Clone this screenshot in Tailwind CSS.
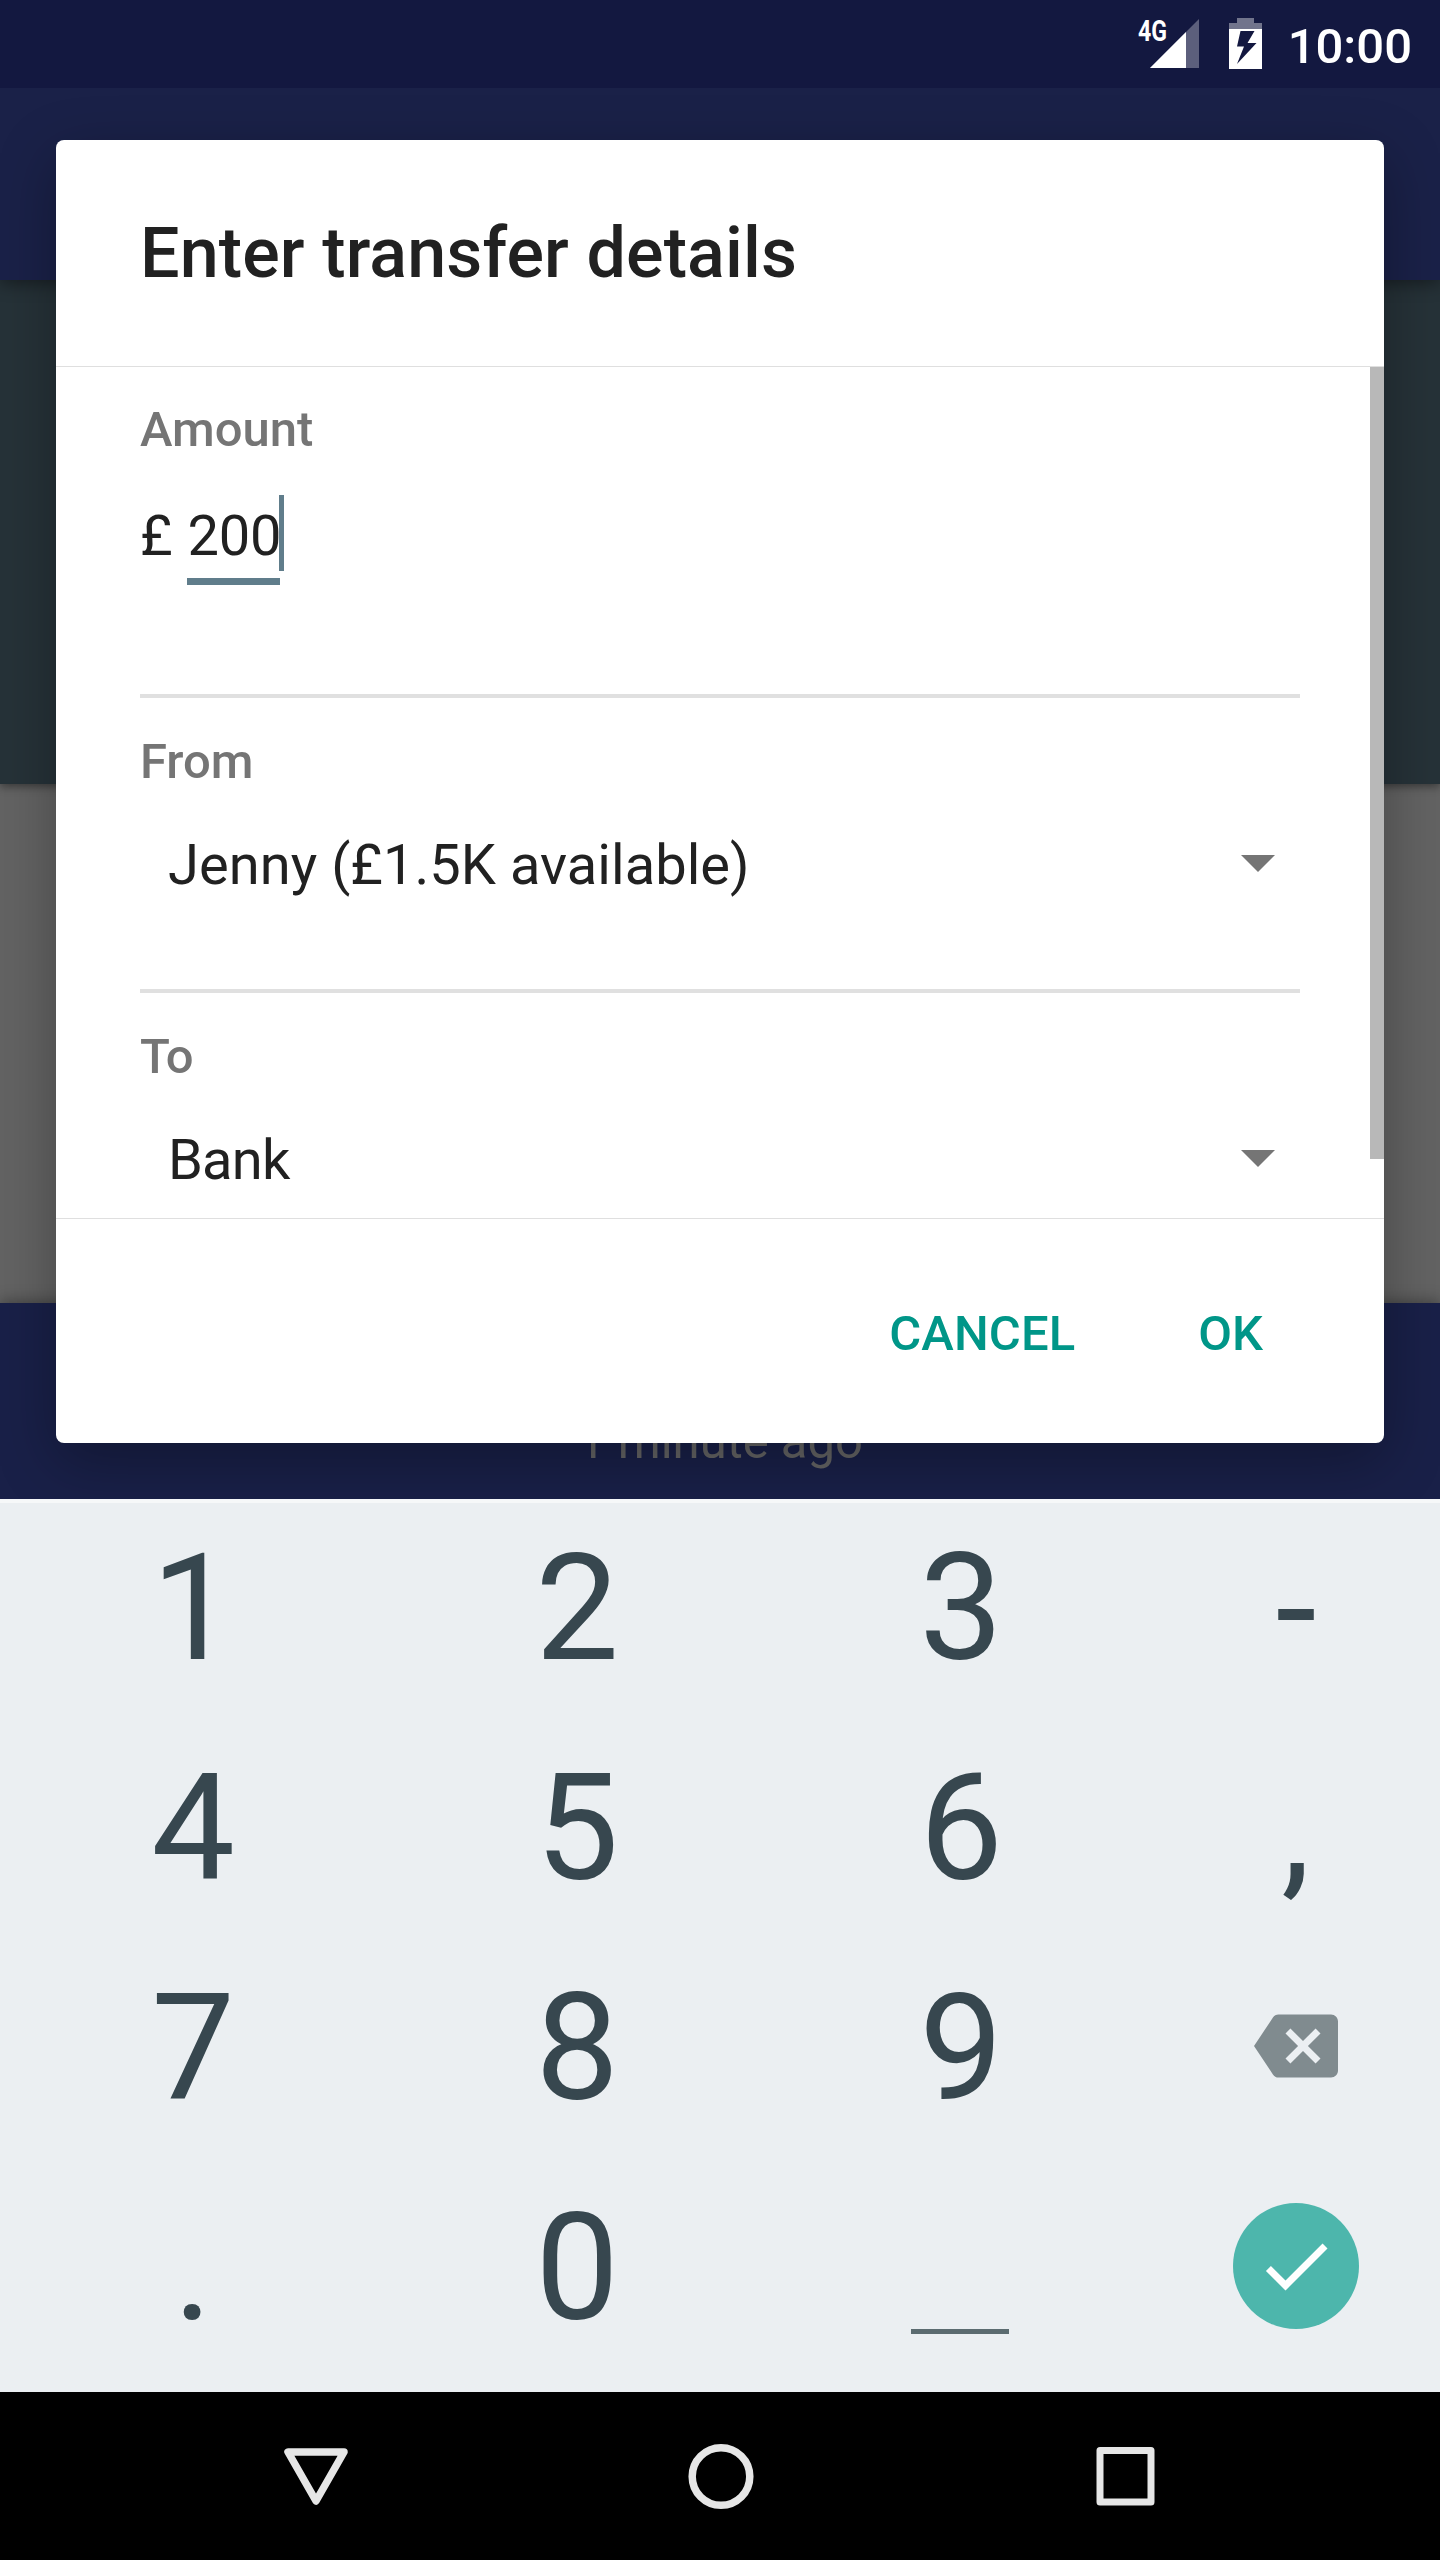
<!DOCTYPE html>
<html lang="en">
<head>
<meta charset="utf-8">
<title>Transfer</title>
<script src="https://cdn.jsdelivr.net/npm/@tailwindcss/browser@4"></script>
</head>
<body class="bg-black">
<div class="relative flex h-[2560px] w-[1440px] flex-col overflow-hidden font-['Roboto',sans-serif]">

  <!-- Status bar -->
  <header class="relative z-20 flex h-[88px] shrink-0 items-start justify-end bg-[#131840] pr-[28px] text-white">
    <div class="relative mt-[18px] h-[52px] w-[62px]">
      <span class="absolute -top-[5px] left-0 origin-left scale-x-[0.77] text-[30px] leading-[36px] font-bold">4G</span>
      <svg class="absolute top-0 left-[12px]" width="50" height="50" viewBox="0 0 50 50"><path d="M0 50L49 1V50Z" fill="#5c5f7c"/><path d="M0 50L36 14V50Z" fill="#fff"/></svg>
    </div>
    <svg class="mt-[18px] ml-[29px]" width="33" height="51" viewBox="0 0 33 51"><path d="M0 11V5H8V0H25V5H33V11Z" fill="#71748c"/><path d="M0 11H33V51H0ZM11.500 13L8 28.500H15L8 46L27.500 25H18.500L25.500 13Z" fill="#fff" fill-rule="evenodd"/></svg>
    <span class="mt-[18px] ml-[26px] text-[49px] leading-[58px] font-medium">10:00</span>
  </header>

  <!-- Dimmed activity behind the dialog -->
  <main class="flex h-[1411px] shrink-0 flex-col bg-[#636363]">
    <div class="relative h-[192px] bg-[#1a2148] shadow-[0_4px_16px_rgba(0,0,0,0.4)]"></div>
    <div class="h-[504px] bg-[#263238] shadow-[0_3px_8px_rgba(0,0,0,0.4)]"></div>
    <div class="flex-1"></div>
    <div class="h-[196px] bg-[#192048] pt-[110px] pl-px text-center text-[49px] leading-[58px] text-[#656565] shadow-[0_-2px_14px_rgba(0,0,0,0.35)]">1 minute ago</div>
  </main>

  <!-- Dialog -->
  <section class="absolute top-[140px] left-[56px] z-10 flex h-[1303px] w-[1328px] flex-col rounded-[8px] bg-white text-[#212121] shadow-[0_18px_60px_rgba(0,0,0,0.3)]">
    <h1 class="h-[227px] shrink-0 border-b border-[#dfdfdf] pt-[72px] pl-[84px] text-[70px] leading-[82px] font-medium tracking-[0.13px]">Enter transfer details</h1>
    <div class="relative h-[851px] shrink-0 overflow-hidden px-[84px] pt-[34px]">
      <div class="text-[49px] leading-[58px] font-medium text-[#757575]">Amount</div>
      <div class="mt-[44px] flex text-[56px] leading-[66px]">
        <span class="mr-px whitespace-pre">£ </span>
        <span class="relative tracking-[-0.2px]">200<span class="absolute top-[75px] left-0 h-[7px] w-[93px] bg-[#607d8b]"></span><span class="absolute -top-[8px] left-[92px] h-[76px] w-[5px] bg-[#607d8b]"></span></span>
      </div>
      <div class="mt-[125px] h-[4px] bg-[#e0e0e0]"></div>
      <div class="mt-[35px] text-[49px] leading-[58px] font-medium text-[#757575]">From</div>
      <div class="mt-[41px] flex items-start justify-between pr-[25px] pl-[28px] text-[56px] leading-[66px]">
        <span class="tracking-[0.05px]">Jenny (£1.5K available)</span>
        <svg class="mt-[23px]" width="34" height="17" viewBox="0 0 34 17"><path d="M0 0H34L17 17Z" fill="#757575"/></svg>
      </div>
      <div class="mt-[91px] h-[4px] bg-[#e0e0e0]"></div>
      <div class="mt-[35px] text-[49px] leading-[58px] font-medium tracking-[-0.8px] text-[#757575]">To</div>
      <div class="mt-[41px] flex items-start justify-between pr-[25px] pl-[28px] text-[56px] leading-[66px]">
        <span class="tracking-[-0.8px]">Bank</span>
        <svg class="mt-[23px]" width="34" height="17" viewBox="0 0 34 17"><path d="M0 0H34L17 17Z" fill="#757575"/></svg>
      </div>
      <div class="absolute -top-px right-0 h-[793px] w-[14px] bg-[#b8b8b8]"></div>
    </div>
    <div class="flex flex-1 justify-end gap-[123px] border-t border-[#dfdfdf] pt-[86px] pr-[121px] text-[49px] leading-[58px] font-medium text-[#009688]">
      <span class="tracking-[0.1px]">CANCEL</span><span>OK</span>
    </div>
  </section>

  <!-- Numeric keyboard -->
  <section class="relative z-20 grid h-[893px] shrink-0 auto-rows-[220px] grid-cols-[384px_384px_384px_286px] border-t-4 border-[#f6f8f9] bg-[#ebeff2] pl-px text-center text-[149px] leading-[210px] text-[#37474f]">
    <span>1</span><span>2</span><span>3</span><span>-</span>
    <span>4</span><span>5</span><span>6</span><span>,</span>
    <span>7</span><span>8</span><span>9</span>
    <div class="flex h-[206px] items-center justify-center">
      <svg width="84" height="84" viewBox="0 0 24 24" fill="#808b8f"><path d="M22 3H7c-.69 0-1.230.350-1.590.880L0 12l5.410 8.110c.360.530.900.890 1.590.890h15c1.100 0 2-.900 2-2V5c0-1.100-.900-2-2-2zm-3 12.590L17.590 17 14 13.410 10.410 17 9 15.590 12.590 12 9 8.410 10.410 7 14 10.590 17.590 7 19 8.410 15.410 12 19 15.590z"/></svg>
    </div>
    <span>.</span><span>0</span>
    <div class="flex justify-center pt-[166px] pr-[2px]"><div class="h-[5px] w-[98px] bg-[#5b6b70]"></div></div>
    <div class="flex h-[206px] items-center justify-center">
      <div class="flex size-[126px] items-center justify-center rounded-full bg-[#4db6ac]">
        <svg width="84" height="84" viewBox="0 0 24 24" fill="#fff"><path d="M9 16.170L4.830 12l-1.420 1.410L9 19 21 7l-1.410-1.410z"/></svg>
      </div>
    </div>
  </section>

  <!-- Navigation bar -->
  <nav class="relative z-20 flex h-[168px] items-center justify-center gap-[325px] bg-black pl-px">
    <svg width="80" height="80" viewBox="0 0 80 80" fill="none" stroke="#e6e6e6" stroke-width="7.500" stroke-linejoin="round"><path d="M12 16H68L40 65Z"/></svg>
    <svg width="80" height="80" viewBox="0 0 80 80" fill="none" stroke="#e6e6e6" stroke-width="7.500"><circle cx="40" cy="40.500" r="28.800"/></svg>
    <svg width="80" height="80" viewBox="0 0 80 80" fill="none" stroke="#e6e6e6" stroke-width="7" stroke-linejoin="round"><rect x="14" y="14.500" width="51" height="51.500"/></svg>
  </nav>
</div>
</body>
</html>
